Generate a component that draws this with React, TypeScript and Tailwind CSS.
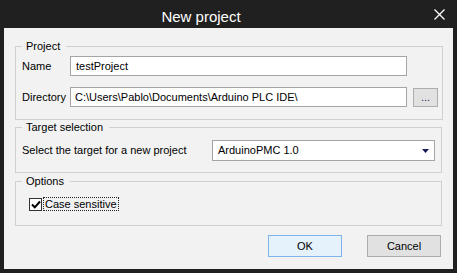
import { useState } from "react";

const font = { fontFamily: '"Liberation Sans", Arial, sans-serif' };

function GroupBox({ title, className, children }: { title: string; className?: string; children: React.ReactNode }) {
  return (
    <fieldset className={`border border-[#d0d0d0] ${className ?? ""}`}>
      <legend className="ml-[6px] pl-[4px] pr-[6px] text-[11px] leading-[13px] text-black">{title}</legend>
      {children}
    </fieldset>
  );
}

export default function App() {
  const [caseSensitive, setCaseSensitive] = useState(true);

  return (
    <div className="w-[457px] h-[273px] bg-[#202020] flex flex-col select-none" style={font}>
      {/* title bar */}
      <div className="h-[28px] flex shrink-0">
        <div className="flex-1 text-center text-white text-[15px] leading-[22px] pt-[6px] pr-[21px]">New project</div>
        <div className="w-[34px] flex items-center justify-center pr-[2px]">
          <svg width="11" height="11" viewBox="0 0 11 11">
            <path d="M0.5 0.5 L10.5 10.5 M10.5 0.5 L0.5 10.5" stroke="#fff" strokeWidth="1.3" />
          </svg>
        </div>
      </div>

      {/* body */}
      <div className="mx-[4px] mb-[4px] flex-1 bg-[#f2f2f2] px-[11px] pt-[12px] pb-[12px] flex flex-col text-[11px] text-black">
        <GroupBox title="Project" className="h-[80px]">
          <div className="pl-[6px] pr-[4px] pt-[3px] flex flex-col gap-[11px]">
            <div className="flex items-center">
              <span className="w-[48px]">Name</span>
              <div className="w-[337px] h-[20px] bg-white border border-[#a5a5a5] pl-[5px] flex items-center">testProject</div>
            </div>
            <div className="flex items-center">
              <span className="w-[48px]">Directory</span>
              <div className="w-[337px] h-[20px] bg-white border border-[#a5a5a5] pl-[4px] flex items-center">
                C:\Users\Pablo\Documents\Arduino PLC IDE\
              </div>
              <button className="ml-[6px] w-[25px] h-[19px] bg-[#e1e1e1] border border-[#adadad] flex items-end justify-center pb-[3px] text-[#1a1a5a] leading-none">
                ...
              </button>
            </div>
          </div>
        </GroupBox>

        <GroupBox title="Target selection" className="mt-[1px] h-[52px]">
          <div className="pl-[6px] pr-[6px] pt-[6px] flex items-center justify-between">
            <span>Select the target for a new project</span>
            <div className="w-[223px] h-[21px] bg-white border border-[#a5a5a5] pl-[5px] pr-[5px] flex items-center justify-between">
              <span>ArduinoPMC 1.0</span>
              <svg width="7" height="4" viewBox="0 0 7 4">
                <path d="M0 0 H7 L3.5 4 Z" fill="#1a1a5a" />
              </svg>
            </div>
          </div>
        </GroupBox>

        <GroupBox title="Options" className="mt-[2px] h-[51px]">
          <label className="ml-[13px] mt-[9px] flex items-center gap-[1px] w-fit">
            <span
              onClick={() => setCaseSensitive(!caseSensitive)}
              className="w-[13px] h-[13px] bg-white border border-[#333] flex items-center justify-center"
            >
              {caseSensitive && (
                <svg width="10" height="9" viewBox="0 0 10 9">
                  <path d="M1 4.5 L3.8 7.3 L9 1.5" stroke="#000" strokeWidth="2" fill="none" />
                </svg>
              )}
            </span>
            <span className="border border-dotted border-[#222] px-[1px] leading-[12px]">Case sensitive</span>
          </label>
        </GroupBox>

        <div className="mt-[9px] flex justify-end gap-[25px] pr-[1px]">
          <button className="w-[74px] h-[22px] bg-[#e5f1fb] border border-[#7eb4ea] text-black">OK</button>
          <button className="w-[74px] h-[22px] bg-[#e1e1e1] border border-[#adadad] text-black">Cancel</button>
        </div>
      </div>
    </div>
  );
}
